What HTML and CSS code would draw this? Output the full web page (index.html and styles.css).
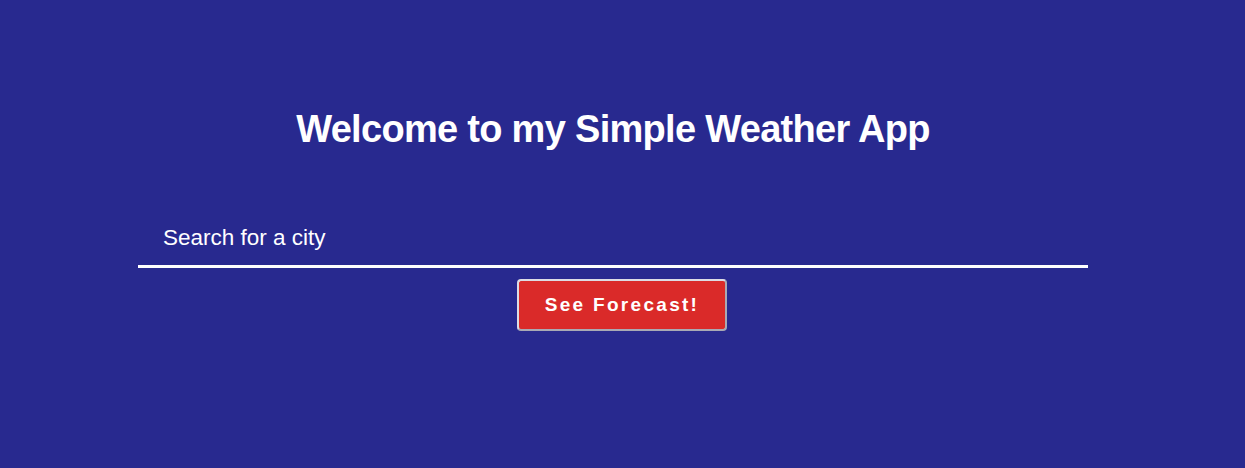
FILE: index.html
```html
<!DOCTYPE html>
<html lang="en">
<head>
<meta charset="utf-8">
<title>Simple Weather App</title>
<link rel="stylesheet" href="styles.css">
</head>
<body>
<main class="app">
  <div class="search-block">
    <h1 class="title">Welcome to my Simple Weather App</h1>
    <input class="city-input" type="text" placeholder="Search for a city">
  </div>
  <div class="actions">
    <button class="forecast-btn" type="button">See Forecast!</button>
  </div>
</main>
</body>
</html>
```
FILE: styles.css
```css
html, body {
  margin: 0;
  padding: 0;
  height: 100%;
}
body {
  background: #28298f;
  font-family: "Liberation Sans", Arial, sans-serif;
  color: #fff;
}
.app {
  padding-top: 107px;
}
.search-block {
  width: 950px;
  margin-left: 138px;
  display: flex;
  flex-direction: column;
  align-items: center;
}
.title {
  margin: 0;
  font-family: "Liberation Sans", Arial, sans-serif;
  font-weight: 700;
  font-size: 38px;
  letter-spacing: -0.7px;
  line-height: 44px;
}
.city-input {
  margin-top: 65px;
  width: 100%;
  box-sizing: border-box;
  background: transparent;
  border: none;
  border-bottom: 3px solid #fff;
  padding: 9px 25px 14px;
  font-family: "Liberation Sans", Arial, sans-serif;
  font-size: 22.5px;
  color: #fff;
  outline: none;
}
.city-input::placeholder {
  color: #fff;
  opacity: 1;
}
.actions {
  display: flex;
  justify-content: center;
  margin-top: 11px;
}
.forecast-btn {
  width: 210px;
  height: 52px;
  margin-right: 1px;
  background: #da2a29;
  border: 2px solid #dcdce4;
  border-right-color: #a9a9b4;
  border-bottom-color: #a9a9b4;
  border-radius: 4px;
  color: #fff;
  font-family: "Liberation Sans", Arial, sans-serif;
  font-weight: 700;
  font-size: 19px;
  letter-spacing: 2.3px;
  cursor: pointer;
}
```
